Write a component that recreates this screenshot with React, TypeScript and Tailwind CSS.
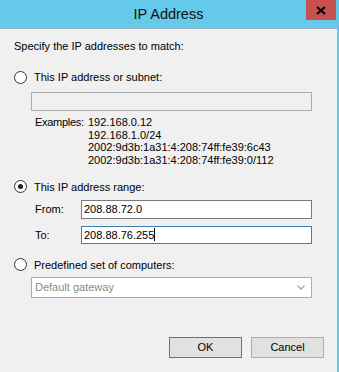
import React from "react";

const Radio: React.FC<{ checked?: boolean }> = ({ checked }) => (
  <span className="w-[13px] h-[13px] rounded-full border border-[#333] bg-white flex items-center justify-center shrink-0">
    {checked && <span className="w-[5px] h-[5px] rounded-full bg-[#222]" />}
  </span>
);

const App: React.FC = () => {
  return (
    <div
      className="w-[339px] h-[372px] overflow-hidden bg-[#f0f0f0] border-r-2 border-[#62c6e6] flex flex-col text-[11px] text-black"
      style={{ fontFamily: '"Liberation Sans", Arial, sans-serif' }}
    >
      {/* title bar */}
      <div className="relative h-[29px] bg-[#65c9e9] border-b border-[#9bb3c2] flex items-center justify-center shrink-0">
        <span className="text-[14.5px] text-[#111] mt-[2px]">IP Address</span>
        <div className="absolute right-[1px] top-0 w-[30px] h-[20px] bg-[#c75050] flex items-center justify-center">
          <svg width="10" height="9" viewBox="0 0 10 9">
            <path d="M1 1 L9 8 M9 1 L1 8" stroke="#000" strokeWidth="2.2" />
          </svg>
        </div>
      </div>

      <div className="flex flex-col pl-[13px] pr-[25px]">
        <div className="mt-[10px] leading-[14px] ml-[1px]">Specify the IP addresses to match:</div>

        {/* option 1 */}
        <div className="mt-[17px] flex items-center gap-[7px] leading-[14px] ml-[1px]">
          <Radio />
          <span>This IP address or subnet:</span>
        </div>
        <div className="mt-[8px] ml-[18px] h-[19px] border border-[#adadad] bg-[#f0f0f0]" />
        <div className="mt-[5px] ml-[22px] flex leading-[12.7px]">
          <span className="w-[53px] shrink-0 tracking-[-0.3px]">Examples:</span>
          <div className="flex flex-col">
            <span>192.168.0.12</span>
            <span>192.168.1.0/24</span>
            <span>2002:9d3b:1a31:4:208:74ff:fe39:6c43</span>
            <span>2002:9d3b:1a31:4:208:74ff:fe39:0/112</span>
          </div>
        </div>

        {/* option 2 */}
        <div className="mt-[13px] flex items-center gap-[7px] leading-[14px] ml-[1px]">
          <Radio checked />
          <span>This IP address range:</span>
        </div>
        <div className="mt-[6px] flex items-center">
          <span className="w-[68px] shrink-0 pl-[22px]">From:</span>
          <div className="flex-1 h-[19px] border border-[#7a7a7a] bg-white flex items-center px-[2px]">
            208.88.72.0
          </div>
        </div>
        <div className="mt-[7px] flex items-center">
          <span className="w-[68px] shrink-0 pl-[22px]">To:</span>
          <div className="flex-1 h-[18px] border border-[#3c7fb1] bg-white flex items-center px-[2px]">
            208.88.76.255
            <span className="w-px h-[13px] bg-black" />
          </div>
        </div>

        {/* option 3 */}
        <div className="mt-[14px] flex items-center gap-[7px] leading-[14px] ml-[1px]">
          <Radio />
          <span>Predefined set of computers:</span>
        </div>
        <div className="mt-[5px] ml-[18px] h-[21px] border border-[#adadad] bg-white flex items-center justify-between pl-[3px] pr-[6px] text-[#8a8a8a]">
          <span>Default gateway</span>
          <svg width="8" height="5" viewBox="0 0 8 5">
            <path d="M0.5 0.5 L4 4 L7.5 0.5" stroke="#a8a8a8" strokeWidth="1.3" fill="none" />
          </svg>
        </div>
      </div>

      {/* buttons */}
      <div className="mt-auto mb-[14px] flex justify-end gap-[9px] pr-[13px]">
        <button className="w-[73px] h-[21px] border border-[#3c7fb1] bg-[#e1e1e1] flex items-center justify-center">
          OK
        </button>
        <button className="w-[73px] h-[21px] border border-[#adadad] bg-[#e1e1e1] flex items-center justify-center">
          Cancel
        </button>
      </div>
    </div>
  );
};

export default App;
